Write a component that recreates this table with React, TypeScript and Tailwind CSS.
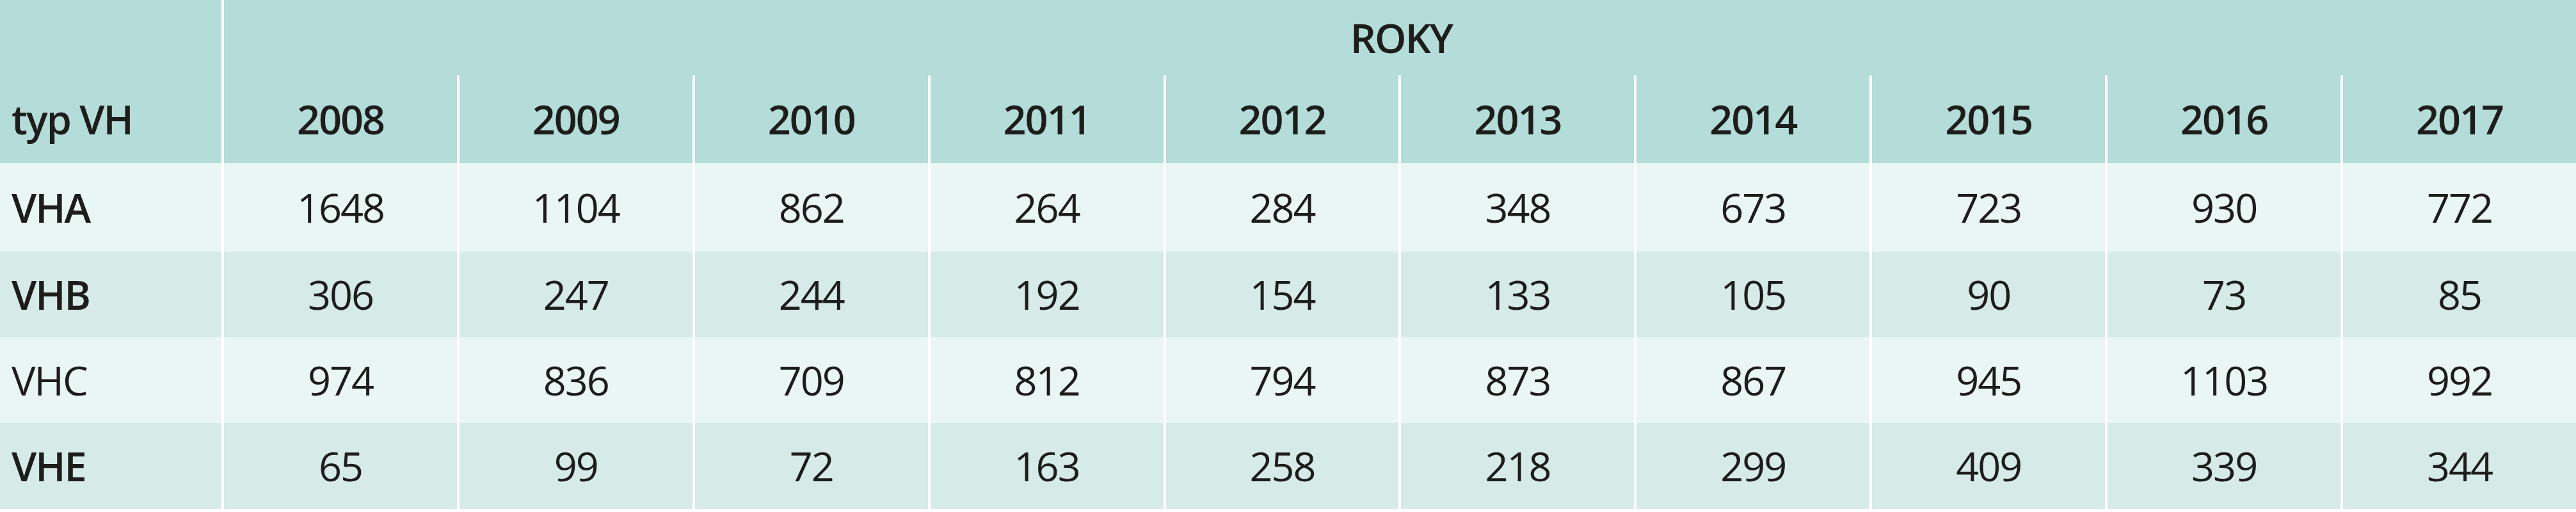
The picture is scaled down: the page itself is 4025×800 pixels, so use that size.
const years = [2008, 2009, 2010, 2011, 2012, 2013, 2014, 2015, 2016, 2017]

const rows = [
  { label: 'VHA', bold: true, light: true, h: 'h-[138px]', values: [1648, 1104, 862, 264, 284, 348, 673, 723, 930, 772] },
  { label: 'VHB', bold: true, light: false, h: 'h-[134px]', values: [306, 247, 244, 192, 154, 133, 105, 90, 73, 85] },
  { label: 'VHC', bold: false, light: true, h: 'h-[134px]', values: [974, 836, 709, 812, 794, 873, 867, 945, 1103, 992] },
  { label: 'VHE', bold: true, light: false, h: 'h-[134px]', values: [65, 99, 72, 163, 258, 218, 299, 409, 339, 344] },
]

export default function App() {
  return (
    <div className="w-[4025px] h-[800px] bg-white font-['Open_Sans',sans-serif] text-[63px] tracking-[-2px] text-[#1d1d1b]">
      <div className="grid grid-cols-[346px_repeat(10,1fr)] gap-x-[4px]">
        {/* header */}
        <div className="row-span-2 bg-[#b4dcd8] flex flex-col justify-end">
          <div className="h-[137px] flex items-center pl-[18px] font-semibold">typ VH</div>
        </div>
        <div className="col-span-10 h-[118px] bg-[#b4dcd8] flex items-center justify-center font-semibold -mr-[4px]">
          ROKY
        </div>
        {years.map(y => (
          <div key={y} className="h-[137px] bg-[#b4dcd8] flex items-center justify-center font-semibold">
            {y}
          </div>
        ))}

        {/* body */}
        {rows.map(r => {
          const bg = r.light ? 'bg-[#eaf6f4]' : 'bg-[#d6eae7]'
          return [
            <div key={r.label} className={`${r.h} ${bg} flex items-center pl-[18px] ${r.bold ? 'font-semibold' : 'font-normal'}`}>
              {r.label}
            </div>,
            ...r.values.map((v, i) => (
              <div key={r.label + i} className={`${r.h} ${bg} flex items-center justify-center`}>
                {v}
              </div>
            )),
          ]
        })}
      </div>
    </div>
  )
}
